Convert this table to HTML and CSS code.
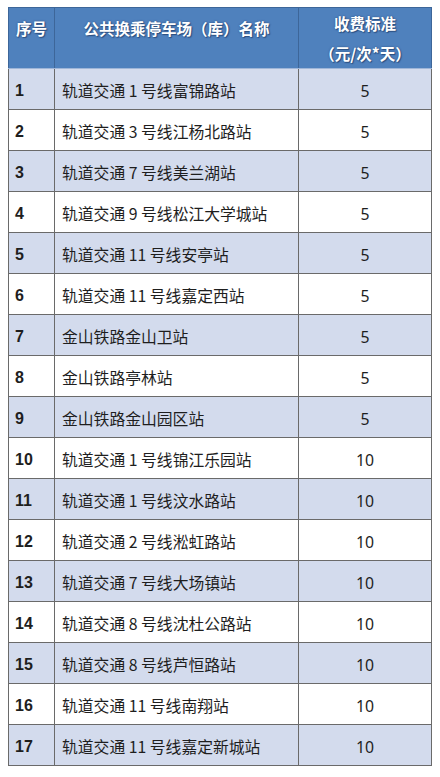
FILE: index.html
```html
<!DOCTYPE html>
<html lang="zh">
<head>
<meta charset="utf-8">
<link rel="stylesheet" href="styles.css">
</head>
<body>
<table class="fee">
  <colgroup><col class="c1"><col class="c2"><col class="c3"></colgroup>
  <thead>
    <tr>
      <th class="h-top">序号</th>
      <th class="h-top">公共换乘停车场（库）名称</th>
      <th class="h-fee">收费标准<br>（元/次*天）</th>
    </tr>
  </thead>
  <tbody>
    <tr class="odd"><td class="no">1</td><td class="name">轨道交通 1 号线富锦路站</td><td class="fee-v">5</td></tr>
    <tr><td class="no">2</td><td class="name">轨道交通 3 号线江杨北路站</td><td class="fee-v">5</td></tr>
    <tr class="odd"><td class="no">3</td><td class="name">轨道交通 7 号线美兰湖站</td><td class="fee-v">5</td></tr>
    <tr><td class="no">4</td><td class="name">轨道交通 9 号线松江大学城站</td><td class="fee-v">5</td></tr>
    <tr class="odd"><td class="no">5</td><td class="name">轨道交通 11 号线安亭站</td><td class="fee-v">5</td></tr>
    <tr><td class="no">6</td><td class="name">轨道交通 11 号线嘉定西站</td><td class="fee-v">5</td></tr>
    <tr class="odd"><td class="no">7</td><td class="name">金山铁路金山卫站</td><td class="fee-v">5</td></tr>
    <tr><td class="no">8</td><td class="name">金山铁路亭林站</td><td class="fee-v">5</td></tr>
    <tr class="odd"><td class="no">9</td><td class="name">金山铁路金山园区站</td><td class="fee-v">5</td></tr>
    <tr><td class="no">10</td><td class="name">轨道交通 1 号线锦江乐园站</td><td class="fee-v">10</td></tr>
    <tr class="odd"><td class="no">11</td><td class="name">轨道交通 1 号线汶水路站</td><td class="fee-v">10</td></tr>
    <tr><td class="no">12</td><td class="name">轨道交通 2 号线淞虹路站</td><td class="fee-v">10</td></tr>
    <tr class="odd"><td class="no">13</td><td class="name">轨道交通 7 号线大场镇站</td><td class="fee-v">10</td></tr>
    <tr><td class="no">14</td><td class="name">轨道交通 8 号线沈杜公路站</td><td class="fee-v">10</td></tr>
    <tr class="odd"><td class="no">15</td><td class="name">轨道交通 8 号线芦恒路站</td><td class="fee-v">10</td></tr>
    <tr><td class="no">16</td><td class="name">轨道交通 11 号线南翔站</td><td class="fee-v">10</td></tr>
    <tr class="odd"><td class="no">17</td><td class="name">轨道交通 11 号线嘉定新城站</td><td class="fee-v">10</td></tr>
  </tbody>
</table>
</body>
</html>
```
FILE: styles.css
```css
html, body {
  margin: 0;
  padding: 0;
  background: #ffffff;
}
body {
  padding: 7px 0 0 8px;
  font-family: "Noto Sans CJK SC", "Noto Sans", sans-serif;
  color: #1e1e1e;
}
.fee {
  border-collapse: collapse;
  width: 423px;
  table-layout: fixed;
}
.c1 { width: 46px; }
.c2 { width: 244px; }
.c3 { width: 133px; }

th {
  background: #4f81bd;
  color: #ffffff;
  font-size: 15.5px;
  font-weight: bold;
  vertical-align: top;
  border: 1px solid #3d6699;
  border-bottom: 1px solid #9fb6d8;
  text-shadow: 0 0 2px #2c4f80, 1px 1px 1px #2c4f80;
  padding: 0;
}
.h-top {
  line-height: 30px;
  padding-top: 5px;
  height: 54px;
}
.h-fee {
  line-height: 30px;
  padding-top: 0;
  height: 59px;
}
th:nth-child(2), th:nth-child(3) {
  border-left-color: #a8bddc;
}

td {
  border: 1px solid #6a6a6a;
  padding: 4px 0 0 0;
  height: 36px;
  font-size: 15.8px;
  line-height: 20px;
  vertical-align: middle;
}
tr.odd td { background: #d3dbed; }
.no {
  font-family: "Liberation Sans", "Noto Sans CJK SC", sans-serif;
  font-weight: bold;
  font-size: 16px;
  padding-left: 6px;
}
.name {
  padding-left: 7px;
  white-space: nowrap;
}
.fee-v {
  text-align: center;
  font-family: "Noto Sans", "Noto Sans CJK SC", sans-serif;
}
```
